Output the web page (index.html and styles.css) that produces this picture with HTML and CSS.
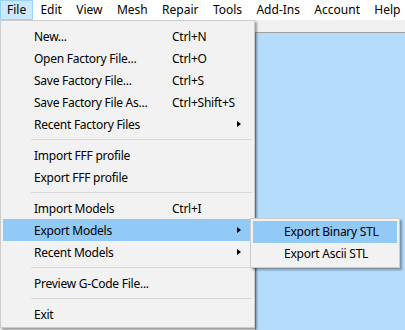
FILE: index.html
```html
<!DOCTYPE html>
<html lang="en">
<head>
    <meta charset="UTF-8">
    <meta name="viewport" content="width=device-width, initial-scale=1.0">
    <title>File Menu</title>
    <link rel="stylesheet" href="styles.css">
</head>
<body>
    <div class="menubar">
        <span class="menubar-item active">File</span>
        <span class="menubar-item">Edit</span>
        <span class="menubar-item">View</span>
        <span class="menubar-item">Mesh</span>
        <span class="menubar-item">Repair</span>
        <span class="menubar-item">Tools</span>
        <span class="menubar-item">Add-Ins</span>
        <span class="menubar-item">Account</span>
        <span class="menubar-item">Help</span>
    </div>

    <div class="workspace">
        <div class="toolbar"></div>
        <div class="main">
            <div class="side-panel"></div>
            <div class="canvas"></div>
        </div>
    </div>

    <!-- File dropdown -->
    <div class="menu">
        <div class="menu-item"><span class="label">New...</span><span class="shortcut">Ctrl+N</span></div>
        <div class="menu-item"><span class="label">Open Factory File...</span><span class="shortcut">Ctrl+O</span></div>
        <div class="menu-item"><span class="label">Save Factory File...</span><span class="shortcut">Ctrl+S</span></div>
        <div class="menu-item"><span class="label">Save Factory File As...</span><span class="shortcut">Ctrl+Shift+S</span></div>
        <div class="menu-item"><span class="label">Recent Factory Files</span><span class="arrow"></span></div>
        <div class="separator"></div>
        <div class="menu-item"><span class="label">Import FFF profile</span></div>
        <div class="menu-item"><span class="label">Export FFF profile</span></div>
        <div class="separator"></div>
        <div class="menu-item"><span class="label">Import Models</span><span class="shortcut">Ctrl+I</span></div>
        <div class="menu-item selected">
            <span class="label">Export Models</span><span class="arrow"></span>
            <div class="submenu">
                <div class="sub-item selected">Export Binary STL</div>
                <div class="sub-item">Export Ascii STL</div>
            </div>
        </div>
        <div class="menu-item"><span class="label">Recent Models</span><span class="arrow"></span></div>
        <div class="separator"></div>
        <div class="menu-item"><span class="label">Preview G-Code File...</span></div>
        <div class="separator"></div>
        <div class="menu-item"><span class="label">Exit</span></div>
    </div>
</body>
</html>
```

FILE: styles.css
```css
body {
    margin: 0;
    width: 405px;
    height: 330px;
    overflow: hidden;
    position: relative;
    font-family: "Noto Sans", "Open Sans", sans-serif;
    font-size: 12px;
    color: #000;
    background-color: #f0f0f0;
}

/* top menu bar */
.menubar {
    display: flex;
    height: 20px;
    background-color: #fff;
}
.menubar-item {
    flex-shrink: 0;
    white-space: nowrap;
    padding: 0 7.2px;
    line-height: 18px;
    border: 1px solid transparent;
    border-left: none;
    border-right: none;
}
.menubar-item.active {
    background-color: #cce8ff;
    border: 1px solid #99d1ff;
    padding: 0 6px;
}

.workspace {
    display: flex;
    flex-direction: column;
    height: 310px;
}
.toolbar {
    height: 12px;
    background-color: #f0f0f0;
    border-bottom: 1px solid #a0a0a0;
}
.main {
    flex: 1;
    display: flex;
}
.side-panel {
    width: 255px;
    background-color: #f0f0f0;
    border-right: 1px solid #a0a0a0;
}
.canvas {
    flex: 1;
    background-color: #b5dcfa;
}

/* dropdown */
.menu {
    position: absolute;
    left: 0;
    top: 20px;
    width: 249px;
    padding: 4px 2px 2px 2px;
    letter-spacing: -0.25px;
    background-color: #f2f2f2;
    border: 1px solid #cccccc;
    box-shadow: 2px 2px 2px rgba(0, 0, 0, 0.35);
}
.menu-item {
    position: relative;
    display: flex;
    align-items: center;
    height: 22px;
}
.menu-item .label {
    padding-left: 31px;
    width: 138px;
    white-space: nowrap;
}
.menu-item .shortcut {
    white-space: nowrap;
}
.menu-item .arrow {
    position: absolute;
    left: 234px;
    top: 8px;
    width: 0;
    height: 0;
    border-top: 3.5px solid transparent;
    border-bottom: 3.5px solid transparent;
    border-left: 4px solid #000;
}
.selected {
    background-color: #91c9f7;
}
.separator {
    height: 1px;
    margin: 4px 0 4px 28px;
    background-color: #d7d7d7;
}

.submenu {
    position: absolute;
    left: 247px;
    top: -1px;
    width: 144px;
    padding: 2px 2px;
    background-color: #f2f2f2;
    border: 1px solid #cccccc;
    box-shadow: 2px 2px 2px rgba(0, 0, 0, 0.35);
}
.sub-item {
    height: 22px;
    line-height: 22px;
    padding-left: 31px;
    white-space: nowrap;
}
```
